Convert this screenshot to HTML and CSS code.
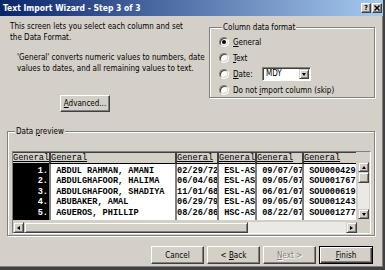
FILE: index.html
```html
<!doctype html>
<html lang="en">

<head>
  <meta charset="UTF-8" />
  <title>Text Import Wizard - Step 3 of 3</title>
  <link rel="stylesheet" href="styles.css">
</head>

<body>
  <div class="window">
    <div class="titlebar">
      <span class="title">Text Import Wizard - Step 3 of 3</span>
      <span class="caption-buttons">
        <span class="cbtn help">?</span>
        <span class="cbtn close">
          <svg width="6" height="6" viewBox="0 0 6 6"><path d="M0.5 0.5L5.5 5.5M5.5 0.5L0.5 5.5" stroke="#000" stroke-width="1.4" /></svg>
        </span>
      </span>
    </div>

    <div class="body">
      <div class="top">
        <div class="intro">
          <p>This screen lets you select each column and set<br>the Data Format.</p>
          <p class="note">'General' converts numeric values to numbers, date<br>values to dates, and all remaining values to text.</p>
          <button class="btn advanced"><u>A</u>dvanced...</button>
        </div>

        <fieldset class="group format">
          <legend>Column data format</legend>
          <div class="radio checked"><span class="dot"></span><span><u>G</u>eneral</span></div>
          <div class="radio"><span class="dot"></span><span><u>T</u>ext</span></div>
          <div class="radio">
            <span class="dot"></span><span class="date-label"><u>D</u>ate:</span>
            <span class="combo"><span class="combo-value">MDY</span><span class="combo-btn"><span class="arrow-down"></span></span></span>
          </div>
          <div class="radio"><span class="dot"></span><span>Do not <u>i</u>mport column (skip)</span></div>
        </fieldset>
      </div>

      <fieldset class="group preview">
        <legend>Data <u>p</u>review</legend>
        <div class="grid">
          <div class="grid-main">
            <div class="sheet">
              <table>
                <colgroup>
                  <col class="c-idx">
                  <col class="c-name">
                  <col class="c-dob">
                  <col class="c-prog">
                  <col class="c-date">
                  <col class="c-id">
                </colgroup>
                <thead>
                  <tr>
                    <th>General</th>
                    <th>General</th>
                    <th>General</th>
                    <th>General</th>
                    <th>General</th>
                    <th>General</th>
                  </tr>
                </thead>
                <tbody>
                  <tr><td class="idx">1.</td><td> ABDUL RAHMAN, AMANI</td><td>02/29/72</td><td> ESL-AS</td><td> 09/07/07</td><td> SOU000429</td></tr>
                  <tr><td class="idx">2.</td><td> ABDULGHAFOOR, HALIMA</td><td>06/04/68</td><td> ESL-AS</td><td> 09/05/07</td><td> SOU001767</td></tr>
                  <tr><td class="idx">3.</td><td> ABDULGHAFOOR, SHADIYA</td><td>11/01/68</td><td> ESL-AS</td><td> 06/01/07</td><td> SOU000619</td></tr>
                  <tr><td class="idx">4.</td><td> ABUBAKER, AMAL</td><td>06/29/79</td><td> ESL-AS</td><td> 09/05/07</td><td> SOU001243</td></tr>
                  <tr><td class="idx">5.</td><td> AGUEROS, PHILLIP</td><td>08/26/86</td><td> HSC-AS</td><td> 08/22/07</td><td> SOU001277</td></tr>
                </tbody>
              </table>
            </div>
            <div class="vscroll">
              <span class="sbtn"><span class="arrow-up"></span></span>
              <span class="thumb"></span>
              <span class="track"></span>
              <span class="sbtn"><span class="arrow-down"></span></span>
            </div>
          </div>
          <div class="grid-bottom">
            <div class="hscroll">
              <span class="sbtn"><span class="arrow-left"></span></span>
              <span class="thumb"></span>
              <span class="track"></span>
              <span class="sbtn"><span class="arrow-right"></span></span>
            </div>
          </div>
        </div>
      </fieldset>

      <div class="actions">
        <button class="btn">Cancel</button>
        <button class="btn">&lt; <u>B</u>ack</button>
        <button class="btn disabled"><u>N</u>ext &gt;</button>
        <button class="btn default"><u>F</u>inish</button>
      </div>
    </div>
  </div>
</body>

</html>
```

FILE: styles.css
```css
* {
  box-sizing: border-box;
}

body {
  margin: 0;
  background-color: #fff;
  font-family: "DejaVu Sans Condensed", "DejaVu Sans", sans-serif;
  font-size: 8px;
  color: #000;
}

u {
  text-decoration: underline;
  text-underline-offset: 1px;
}

.window {
  width: 385px;
  height: 270px;
  background-color: #d4d0c8;
  border-right: 2px solid #404040;
  border-bottom: 3px solid #404040;
  box-shadow: inset -1px -1px #808080;
}

/* title bar */

.titlebar {
  height: 16px;
  display: flex;
  align-items: center;
  justify-content: space-between;
  padding: 0 1px 0 3px;
  background: linear-gradient(to right, #0a246a, #a6caf0);
}

.title {
  color: #fff;
  font-weight: bold;
  font-size: 8.5px;
}

.caption-buttons {
  display: flex;
  gap: 1px;
}

.cbtn {
  width: 10px;
  height: 10px;
  display: flex;
  align-items: center;
  justify-content: center;
  background-color: #d4d0c8;
  border: 1px solid;
  border-color: #fff #404040 #404040 #fff;
  box-shadow: inset -1px -1px #808080;
  font-weight: bold;
  font-size: 7px;
  line-height: 1;
}

/* body */

.body {
  padding-top: 5px;
}

.top {
  display: flex;
  height: 91px;
}

.intro {
  width: 209px;
  padding-left: 10px;
}

p {
  margin: 0;
  line-height: 11px;
}

.note {
  margin-top: 9px;
  padding-left: 7px;
}

.btn {
  height: 18px;
  width: 53px;
  padding: 0;
  font-family: inherit;
  font-size: 8px;
  color: #000;
  background-color: #d4d0c8;
  border: 1px solid;
  border-color: #fff #404040 #404040 #fff;
  box-shadow: inset -1px -1px #808080;
}

.advanced {
  display: block;
  width: 50px;
  height: 17px;
  margin: 21px 0 0 50px;
}

.btn.disabled {
  color: #808080;
  text-shadow: 1px 1px #fff;
}

.btn.default {
  width: 54px;
  border-color: #000;
  box-shadow: inset 1px 1px #fff, inset -1px -1px #404040, inset -2px -2px #808080;
}

/* group boxes */

.group {
  margin: 0;
  padding: 0;
  min-width: 0;
  border: 1px solid #808080;
  box-shadow: 1px 1px 0 #fff, inset 1px 1px 0 #fff;
}

.group legend {
  margin-left: 3px;
  padding: 0 1px;
  line-height: 11px;
  background-color: #d4d0c8;
}

.format {
  width: 166px;
  height: 76px;
  margin-top: 1px;
  padding: 1px 0 0 9px;
}

.radio {
  display: flex;
  align-items: center;
  gap: 4px;
  height: 16px;
}

.dot {
  position: relative;
  width: 10px;
  height: 10px;
  flex: none;
  border-radius: 50%;
  background-color: #fff;
  border: 1px solid;
  border-color: #808080 #fff #fff #808080;
  box-shadow: inset 1px 1px #404040, inset -1px -1px #d4d0c8;
}

.radio.checked .dot::after {
  content: "";
  position: absolute;
  left: 2px;
  top: 2px;
  width: 4px;
  height: 4px;
  border-radius: 50%;
  background-color: #000;
}

.date-label {
  width: 25px;
}

.combo {
  display: flex;
  width: 49px;
  height: 14px;
  background-color: #fff;
  border: 1px solid;
  border-color: #808080 #fff #fff #808080;
  box-shadow: inset 1px 1px #404040;
  padding: 1px 1px 1px 1px;
}

.combo-value {
  flex: 1;
  padding-left: 2px;
  line-height: 10px;
}

.combo-btn {
  width: 10px;
  display: flex;
  align-items: center;
  justify-content: center;
  background-color: #d4d0c8;
  border: 1px solid;
  border-color: #d4d0c8 #404040 #404040 #d4d0c8;
  box-shadow: inset 1px 1px #fff, inset -1px -1px #808080;
}

/* arrows */

.arrow-down,
.arrow-up,
.arrow-left,
.arrow-right {
  width: 0;
  height: 0;
  border: 2px solid transparent;
}

.arrow-down {
  border-top: 3px solid #000;
  border-bottom: 0;
  margin-top: 1px;
}

.arrow-up {
  border-bottom: 3px solid #000;
  border-top: 0;
}

.arrow-left {
  border-right: 3px solid #000;
  border-left: 0;
}

.arrow-right {
  border-left: 3px solid #000;
  border-right: 0;
}

/* data preview */

.preview {
  width: 368px;
  margin: 14px 0 0 7px;
  padding: 14px 0 1px 4px;
}

.grid {
  width: 359px;
  border: 1px solid;
  border-color: #808080 #fff #fff #808080;
}

.grid-main {
  display: flex;
  height: 68px;
}

.sheet {
  width: 343px;
  height: 68px;
  overflow: hidden;
  background-color: #fff;
}

.sheet table {
  width: 343px;
  table-layout: fixed;
  border-collapse: separate;
  border-spacing: 0;
  font-family: "Liberation Mono", "Courier New", monospace;
  font-size: 8.6px;
}

.c-idx { width: 36px; }
.c-name { width: 126px; }
.c-dob { width: 42px; }
.c-prog { width: 38px; }
.c-date { width: 47px; }
.c-id { width: 54px; }

.sheet th,
.sheet td {
  padding: 0;
  white-space: pre;
  overflow: hidden;
  text-align: left;
  border-left: 2px solid #808080;
}

.sheet th:first-child,
.sheet td:first-child {
  border-left: 0;
}

.sheet th {
  height: 12px;
  line-height: 10px;
  font-weight: normal;
  text-decoration: underline;
  background-color: #d4d0c8;
  border-top: 1px solid #404040;
  border-bottom: 1px solid #000;
  border-left-color: #404040;
}

.sheet td {
  height: 10.5px;
  line-height: 10.5px;
  font-weight: bold;
}

.sheet tbody tr:first-child td {
  padding-top: 1.5px;
  height: 12px;
}

.sheet tbody tr:last-child td {
  padding-bottom: 2px;
  height: 12.5px;
}

.sheet td.idx {
  background-color: #000;
  color: #fff;
  text-align: right;
  padding-right: 1px;
}

.vscroll {
  width: 11px;
  margin-left: 2px;
  padding-top: 10px;
  display: flex;
  flex-direction: column;
}

.sbtn {
  flex: none;
  width: 11px;
  height: 10px;
  display: flex;
  align-items: center;
  justify-content: center;
  background-color: #d4d0c8;
  border: 1px solid;
  border-color: #d4d0c8 #404040 #404040 #d4d0c8;
  box-shadow: inset 1px 1px #fff, inset -1px -1px #808080;
}

.thumb {
  flex: none;
  background-color: #d4d0c8;
  border: 1px solid;
  border-color: #d4d0c8 #404040 #404040 #d4d0c8;
  box-shadow: inset 1px 1px #fff, inset -1px -1px #808080;
}

.vscroll .thumb {
  height: 11px;
}

.track {
  flex: 1;
  background-color: #ebe9e5;
}

.vscroll .sbtn:last-child {
  margin-bottom: 1px;
}

.grid-bottom {
  margin-top: 2px;
  display: flex;
}

.hscroll {
  width: 344px;
  height: 11px;
  display: flex;
}

.hscroll .sbtn {
  height: 11px;
}

.hscroll .thumb {
  width: 224px;
}

/* buttons */

.actions {
  display: flex;
  justify-content: flex-end;
  gap: 3px;
  margin-top: 10px;
  padding-right: 10px;
}
```
